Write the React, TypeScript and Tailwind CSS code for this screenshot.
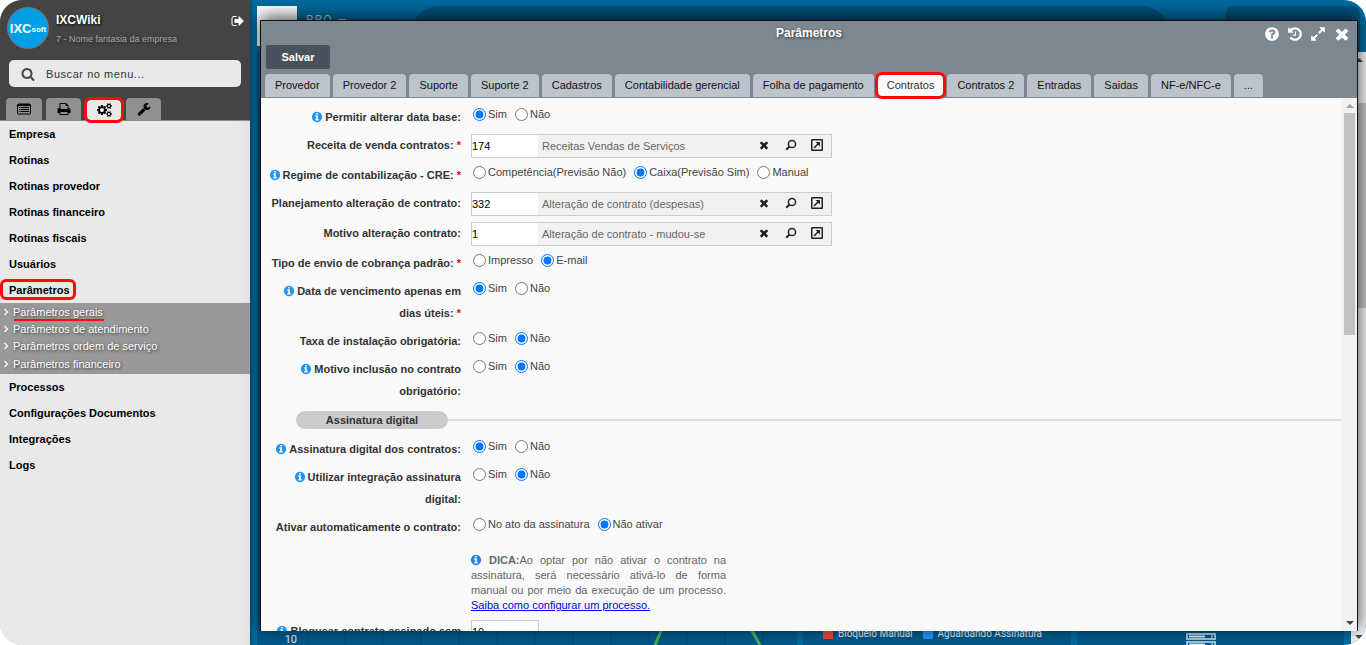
import { useState, type ReactNode } from 'react';

const CIRCLE = 'm640 416q0 209-103 385.5t-279.5 279.5-385.5 103-385.5-103-279.5-279.5-103-385.5 103-385.5 279.5-279.5 385.5-103 385.5 103 279.5 279.5 103 385.5z';
const SMALL_COG = 'v140q0 16-149 31-12 27-30 52 51 113 51 138 0 4-4 7-122 71-124 71-8 0-46-47t-52-68q-20 2-30 2t-30-2q-14 21-52 68t-46 47q-2 0-124-71-4-3-4-7 0-25 51-138-18-25-30-52-149-15-149-31v-140q0-16 149-31 13-29 30-52-51-113-51-138 0-4 4-7 4-2 35-20t59-34 30-16q8 0 46 46.5t52 67.5q20-2 30-2t30 2q51-71 92-112l6-2q4 0 124 70 4 3 4 7 0 25-51 138 17 23 30 52 149 15 149 31z';

const icons = {
    times: 'M1490 1322q0 40-28 68l-136 136q-28 28-68 28t-68-28l-294-294-294 294q-28 28-68 28t-68-28l-136-136q-28-28-28-68t28-68l294-294-294-294q-28-28-28-68t28-68l136-136q28-28 68-28t68 28l294 294 294-294q28-28 68-28t68 28l136 136q28 28 28 68t-28 68l-294 294 294 294q28 28 28 68z',
    question: 'M1024 1376v-192q0-14-9-23t-23-9h-192q-14 0-23 9t-9 23v192q0 14 9 23t23 9h192q14 0 23-9t9-23zm256-672q0-88-55.5-163t-138.5-116-170-41q-243 0-371 213-15 24 8 42l132 100q7 6 19 6 16 0 25-12 53-68 86-92 34-24 86-24 48 0 85.5 26t37.5 59q0 38-20 61t-68 45q-63 28-115.5 86.5t-52.5 125.5v36q0 14 9 23t23 9h192q14 0 23-9t9-23q0-19 21.5-49.5t54.5-49.5q32-18 49-28.5t46-35 44.5-48 28-60.5 12.5-81zm384 192q0 209-103 385.5t-279.5 279.5-385.5 103-385.5-103-279.5-279.5-103-385.5 103-385.5 279.5-279.5 385.5-103 385.5 103 279.5 279.5 103 385.5z',
    info: 'M1152 1376v-160q0-14-9-23t-23-9h-96v-512q0-14-9-23t-23-9h-320q-14 0-23 9t-9 23v160q0 14 9 23t23 9h96v320h-96q-14 0-23 9t-9 23v160q0 14 9 23t23 9h448q14 0 23-9t9-23zm-128-896v-160q0-14-9-23t-23-9h-192q-14 0-23 9t-9 23v160q0 14 9 23t23 9h192q14 0 23-9t9-23z' + CIRCLE,
    search: 'M1216 832q0-185-131.5-316.5t-316.5-131.5-316.5 131.5-131.5 316.5 131.5 316.5 316.5 131.5 316.5-131.5 131.5-316.5zm512 832q0 52-38 90t-90 38q-54 0-90-38l-343-342q-179 124-399 124-143 0-273.5-55.5t-225-150-150-225-55.5-273.5 55.5-273.5 150-225 225-150 273.5-55.5 273.5 55.5 225 150 150 225 55.5 273.5q0 220-124 399l343 343q37 37 37 90z',
    signOut: 'M704 1440q0 4 1 20t.5 26.5-3 23.5-10 19.5-20.5 6.5h-320q-119 0-203.5-84.5t-84.5-203.5v-704q0-119 84.5-203.5t203.5-84.5h320q13 0 22.5 9.5t9.5 22.5q0 4 1 20t.5 26.5-3 23.5-10 19.5-20.5 6.5h-320q-66 0-113 47t-47 113v704q0 66 47 113t113 47h312l11.5 1 11.5 3 8 5.5 7 9 2 13.5zm928-544q0 26-19 45l-544 544q-19 19-45 19t-45-19-19-45v-288h-448q-26 0-45-19t-19-45v-384q0-26 19-45t45-19h448v-288q0-26 19-45t45-19 45 19l544 544q19 19 19 45z',
    print: 'M448 1536h896v-256h-896v256zm0-640h896v-384h-160q-40 0-68-28t-28-68v-160h-640v640zm1152 64q0-26-19-45t-45-19-45 19-19 45 19 45 45 19 45-19 19-45zm128 0v416q0 13-9.5 22.5t-22.5 9.5h-224v160q0 40-28 68t-68 28h-960q-40 0-68-28t-28-68v-160h-224q-13 0-22.5-9.5t-9.5-22.5v-416q0-79 56.5-135.5t135.5-56.5h64v-544q0-40 28-68t68-28h672q40 0 88 20t76 48l152 152q28 28 48 76t20 88v256h64q79 0 135.5 56.5t56.5 135.5z',
    wrench: 'M448 1472q0-26-19-45t-45-19-45 19-19 45 19 45 45 19 45-19 19-45zm644-420l-682 682q-37 37-90 37-52 0-91-37l-106-108q-38-36-38-90 0-53 38-91l681-681q39 98 114.5 173.5t173.5 114.5zm634-435q0 39-23 106-47 134-164.5 217.5t-258.5 83.5q-185 0-316.5-131.5t-131.5-316.5 131.5-316.5 316.5-131.5q58 0 121.5 16.5t107.5 46.5q16 11 16 28t-16 28l-293 169v224l193 107q5-3 79-48.5t135.5-81 70.5-35.5q15 0 23.5 10t8.5 25z',
    cogs: 'M896 896q0-106-75-181t-181-75-181 75-75 181 75 181 181 75 181-75 75-181zm768 512q0-52-38-90t-90-38-90 38-38 90q0 53 37.5 90.5t90.5 37.5 90.5-37.5 37.5-90.5zm0-1024q0-52-38-90t-90-38-90 38-38 90q0 53 37.5 90.5t90.5 37.5 90.5-37.5 37.5-90.5zm-384 421v185q0 10-7 19.5t-16 10.5l-155 24q-11 35-32 76 34 48 90 115 7 11 7 20 0 12-7 19-23 30-82.5 89.5t-78.5 59.5q-11 0-21-7l-115-90q-37 19-77 31-11 108-23 155-7 24-30 24h-186q-11 0-20-7.5t-10-17.5l-23-153q-34-10-75-31l-118 89q-7 7-20 7-11 0-21-8-144-133-144-160 0-9 7-19 10-14 41-53t47-61q-23-44-35-82l-152-24q-10-1-17-9.5t-7-19.5v-185q0-10 7-19.5t16-10.5l155-24q11-35 32-76-34-48-90-115-7-11-7-20 0-12 7-20 22-30 82-89t79-59q11 0 21 7l115 90q34-18 77-32 11-108 23-154 7-24 30-24h186q11 0 20 7.5t10 17.5l23 153q34 10 75 31l118-89q8-7 20-7 11 0 21 8 144 133 144 160 0 8-7 19-12 16-42 54t-45 60q23 48 34 82l152 23q10 2 17 10.5t7 19.5zM1920 1338' + SMALL_COG + 'M1920 314' + SMALL_COG,
    expand: 'M883 1056q0 13-10 23l-332 332 144 144q19 19 19 45t-19 45-45 19h-448q-26 0-45-19t-19-45v-448q0-26 19-45t45-19 45 19l144 144 332-332q10-10 23-10t23 10l114 114q10 10 10 23zm781-864v448q0 26-19 45t-45 19-45-19l-144-144-332 332q-10 10-23 10t-23-10l-114-114q-10-10-10-23t10-23l332-332-144-144q-19-19-19-45t19-45 45-19h448q26 0 45 19t19 45z',
    history: 'M1664 896q0 156-61 298t-164 245-245 164-298 61q-172 0-327-72.5t-264-204.5q-7-10-6.5-22.5t8.5-20.5l137-138q10-9 25-9 16 2 23 12 73 95 179 147t225 52q104 0 198.5-40.5t163.5-109.5 109.5-163.5 40.5-198.5-40.5-198.5-109.5-163.5-163.5-109.5-198.5-40.5q-98 0-188 35.5t-160 101.5l137 138q31 30 14 69-17 40-59 40h-448q-26 0-45-19t-19-45v-448q0-42 40-59 39-17 69 14l130 129q107-101 244.5-156.5t284.5-55.5q156 0 298 61t245 164 164 245 61 298zm-640-288v448q0 14-9 23t-23 9h-320q-14 0-23-9t-9-23v-64q0-14 9-23t23-9h224v-352q0-14 9-23t23-9h64q14 0 23 9t9 23z',
};

function Icon({ name, className }: { name: keyof typeof icons; className: string }) {
    return (
        <svg viewBox={name === 'cogs' ? '0 0 1920 1792' : '0 0 1792 1792'} fill="currentColor" className={className} aria-hidden="true">
            <path d={icons[name]} />
        </svg>
    );
}

function ListIcon() {
    return (
        <svg viewBox="0 0 14 12" className="h-3 w-3.5" fill="none" stroke="currentColor" aria-hidden="true">
            <rect x=".5" y="1" width="13" height="10" rx="1" />
            <path d="M1 2h12" strokeWidth="2" />
            <path d="M2 4.5h1.500M4 4.500h8M2 6.500h1.500M4 6.500h8M2 8.500h1.500M4 8.500h8" />
        </svg>
    );
}

const menuBefore = ['Empresa', 'Rotinas', 'Rotinas provedor', 'Rotinas financeiro', 'Rotinas fiscais', 'Usuários'];
const menuAfter = ['Processos', 'Configurações Documentos', 'Integrações', 'Logs'];
const submenu = ['Parâmetros gerais', 'Parâmetros de atendimento', 'Parâmetros ordem de serviço', 'Parâmetros financeiro'];
const tabs = ['Provedor', 'Provedor 2', 'Suporte', 'Suporte 2', 'Cadastros', 'Contabilidade gerencial', 'Folha de pagamento', 'Contratos', 'Contratos 2', 'Entradas', 'Saidas', 'NF-e/NFC-e', '...'];

function MenuItem({ label }: { label: string }) {
    return (
        <li>
            <a href="#" className="block px-[9px] leading-[26px] font-bold text-black">{label}</a>
        </li>
    );
}

function Sidebar() {
    return (
        <aside className="relative z-10 flex w-[250px] shrink-0 flex-col bg-[#e9e9e9] shadow-[0_0_4px_rgba(0,0,0,0.6)]">
            <header className="relative z-10 border-b border-[#888] bg-[#444]">
                <div className="flex h-[60px] items-start pt-[7px] pr-[5px] pl-[7px]">
                    <div className="flex h-[42px] w-[42px] shrink-0 items-center justify-center rounded-full border border-[#777] bg-[#009fe3] text-white">
                        <span className="text-[13px] leading-none font-bold">IXC</span>
                        <span className="pt-1 text-[8px] leading-none font-bold">soft</span>
                    </div>
                    <div className="flex-1 pl-[7px]">
                        <h1 className="pt-[5px] text-xs leading-4 font-bold text-white [text-shadow:1px_1px_3px_#000]">IXCWiki</h1>
                        <p className="pt-[5px] text-[9px] leading-3 text-[#aaa] [text-shadow:1px_1px_3px_#222]">7 - Nome fantasia da empresa</p>
                    </div>
                    <button type="button" aria-label="Sair" className="pt-[7px] text-white">
                        <Icon name="signOut" className="h-3.5 w-3.5" />
                    </button>
                </div>
                <label className="mx-[9px] flex h-[27px] items-center rounded-[5px] bg-[#e9e9e9] pl-3">
                    <Icon name="search" className="h-3.5 w-3.5 shrink-0 text-[#444]" />
                    <input type="text" aria-label="Buscar no menu" placeholder="Buscar no menu..." className="ml-[11px] w-full min-w-0 bg-transparent pt-px tracking-wider outline-none placeholder:text-[#333]" />
                </label>
                <div className="mt-[11px] flex pl-[6px]">
                    <button type="button" aria-label="Menu" className="mr-1 flex h-[22px] w-9 items-center justify-center rounded-t-[4px] bg-[#909090] text-black"><ListIcon /></button>
                    <button type="button" aria-label="Relatórios" className="mr-[6px] flex h-[22px] w-[35px] items-center justify-center rounded-t-[4px] bg-[#909090] text-black"><Icon name="print" className="h-3.5 w-3.5" /></button>
                    <button type="button" aria-label="Configurações" className="mr-[5px] flex h-5 w-[34px] items-center justify-center self-end rounded-[4px] bg-[#e9e9e9] text-black outline-3 outline-[#ff0a0a]"><Icon name="cogs" className="h-3.5 w-[15px]" /></button>
                    <button type="button" aria-label="Ferramentas" className="flex h-[22px] w-[35px] items-center justify-center rounded-t-[4px] bg-[#909090] text-black"><Icon name="wrench" className="h-3.5 w-3.5" /></button>
                </div>
            </header>
            <nav className="flex-1 overflow-hidden bg-linear-to-r from-[#e9e9e9] from-95% to-[#e1e1e1]">
                <ul>
                    {menuBefore.map((m) => <MenuItem key={m} label={m} />)}
                    <li className="relative">
                        <a href="#" className="block px-[9px] leading-[26px] font-bold text-black">Parâmetros</a>
                        <span className="absolute top-[2px] left-0 h-[21px] w-[76px] rounded-[6px] border-3 border-[#ff0a0a]" />
                    </li>
                    <li>
                        <ul className="h-[71px] bg-[#999]">
                            {submenu.map((s, i) => (
                                <li key={s} className="flex h-[17px] items-center pl-1 nth-3:h-[18px] nth-4:h-[18px]">
                                    <svg viewBox="0 0 5 8" className="h-2 w-[5px]" fill="none" stroke="#fff" strokeWidth="1.200"><path d="M.5 1 3.500 4 .5 7" /></svg>
                                    <a href="#" className="relative ml-1 leading-4 text-white [text-shadow:1px_1px_3px_#333]">
                                        {s}
                                        {i === 0 && <span className="absolute -bottom-px left-px h-[2px] w-full bg-[#ff0a0a]" />}
                                    </a>
                                </li>
                            ))}
                        </ul>
                    </li>
                    {menuAfter.map((m) => <MenuItem key={m} label={m} />)}
                </ul>
            </nav>
        </aside>
    );
}

function Arrow({ up, dark }: { up?: boolean; dark?: boolean }) {
    return (
        <svg viewBox="0 0 8 4" className="h-1 w-2 shrink-0" fill={dark ? '#444' : '#a3a3a3'} aria-hidden="true">
            <path d={up ? 'M0 4 4 0l4 4z' : 'M0 0h8L4 4z'} />
        </svg>
    );
}

// dashboard behind the dialog, only its edges are visible
function Dashboard() {
    return (
        <div className="flex h-full flex-col bg-[#006a9e] font-['Roboto',sans-serif]">
            <div className="flex h-[52px] shrink-0 items-start overflow-hidden pt-[6px] pl-[7px]">
                <div className="h-10 w-10 bg-white" />
                <span className="w-[114px] pl-[9px] text-xs leading-7 tracking-widest text-white/70">BRO —</span>
                <div className="h-14 flex-1 rounded-t-[28px] bg-[#00527f]" />
                <div className="ml-14 h-14 w-[134px] rounded-t-lg bg-[#00527f]" />
                <div className="w-[6px]" />
            </div>
            <div className="flex min-h-0 flex-1">
                <div className="grid min-w-0 flex-1 grid-cols-[540fr_268fr_267fr] gap-[6px] px-[7px]">
                    <section className="flex min-w-0 flex-col justify-end bg-[#00588a]">
                        <div className="flex h-[14px] text-[11px] leading-[18px] text-white/90">
                            <span className="w-[50px] shrink-0 pr-[10px] text-right">10</span>
                            <svg viewBox="0 0 490 14" preserveAspectRatio="none" className="h-full min-w-0 flex-1" fill="none" aria-hidden="true">
                                <path d="M0 0v14M38 0v14M76 0v14M114 0v14M152 0v14M190 0v14M228 0v14M266 0v14M304 0v14M342 0v14M380 0v14M418 0v14M456 0v14" stroke="#004a73" />
                                <path d="m348 14 6-14M445 0l8 14" stroke="#4caf50" strokeWidth="3" />
                            </svg>
                        </div>
                    </section>
                    <section className="flex min-w-0 flex-col justify-end bg-[#00588a]">
                        <div className="flex h-[17px] items-start pl-5 text-[10px] leading-3 whitespace-nowrap text-white/90">
                            <i className="mt-px mr-[5px] h-[10px] w-[10px] bg-[#f44336]" />
                            <span>Bloqueio Manual</span>
                            <i className="mt-px mr-[5px] ml-[10px] h-[10px] w-[10px] bg-[#2196f3]" />
                            <span>Aguardando Assinatura</span>
                        </div>
                    </section>
                    <section className="flex min-w-0 items-end bg-[#00588a] pl-[109px]">
                        <svg viewBox="0 0 30 13" className="h-[13px] w-[30px]" fill="none" stroke="#9fc4d6" aria-hidden="true">
                            <path d="M1 2h28v5H1zM1 10h28v5H1z" strokeWidth="2" />
                            <path d="M3 4.500h16M3 12.500h16" stroke="#d5e5ec" strokeWidth="2" />
                            <path d="M25 4.500h2M25 12.500h2" strokeWidth="2" />
                        </svg>
                    </section>
                </div>
                <div className="flex w-[15px] flex-col items-center bg-[#f1f1f1] py-[6px]">
                    <Arrow up dark />
                    <div className="mt-[41px] h-[205px] w-full bg-[#c1c1c1]" />
                    <div className="flex-1" />
                    <Arrow dark />
                </div>
            </div>
        </div>
    );
}

function Row({ id, label, info, required, control, children }: { id: string; label: string; info?: boolean; required?: boolean; control?: boolean; children: ReactNode }) {
    const text = (
        <>
            {info && <Icon name="info" className="mr-[2px] inline h-3 w-3 align-[-2px] text-[#2196f3]" />}
            {label}
            {required && <span className="text-red-600"> *</span>}
        </>
    );
    return (
        <div className="flex gap-[10px] pb-[6px]">
            <div className="w-[200px] shrink-0 pl-1 text-right leading-[22px] font-bold text-[#333]">
                {control ? <label htmlFor={id}>{text}</label> : <span id={id}>{text}</span>}
            </div>
            {children}
        </div>
    );
}

function RadioRow({ id, label, info, required, options, value }: { id: string; label: string; info?: boolean; required?: boolean; options: string[]; value: string }) {
    const [selected, setSelected] = useState(value);
    return (
        <Row id={id} label={label} info={info} required={required}>
            <div role="radiogroup" aria-labelledby={id} className="flex h-4 gap-2 pl-[2px]">
                {options.map((o) => (
                    <label key={o} className="flex items-center gap-[2px] leading-4 text-[#444]">
                        <input type="radio" name={id} checked={selected === o} onChange={() => setSelected(o)} className="h-[13px] w-[13px]" />
                        {o}
                    </label>
                ))}
            </div>
        </Row>
    );
}

function LookupRow({ id, label, required, code, text }: { id: string; label: string; required?: boolean; code: string; text: string }) {
    return (
        <Row id={id} label={label} required={required} control>
            <div className="flex h-6 w-[361px] items-center border border-[#ccc] bg-[#f1f1f1] text-[#222]">
                <input id={id} type="text" defaultValue={code} className="h-full w-[66px] bg-white text-black outline-none" />
                <span className="flex-1 pl-1 text-[#666]">{text}</span>
                <button type="button" aria-label="Limpar" className="flex w-[26px] justify-center pb-[2px]"><Icon name="times" className="h-3 w-3" /></button>
                <button type="button" aria-label="Buscar" className="flex w-[27px] justify-center pb-[2px]">
                    <svg viewBox="0 0 12 12" className="h-3 w-3" fill="none" stroke="currentColor"><circle cx="7" cy="5" r="3.600" strokeWidth="1.500" /><path d="M4.500 7.500 1.200 10.800" strokeWidth="2" /></svg>
                </button>
                <button type="button" aria-label="Abrir" className="mr-px flex w-[26px] justify-center pb-[2px]">
                    <svg viewBox="0 0 12 12" className="h-3 w-3" fill="none" stroke="currentColor"><rect x=".75" y=".75" width="10.500" height="10.500" rx=".5" strokeWidth="1.500" /><path d="M3 9l4-4" strokeWidth="1.600" /><path d="M4.500 3H9v4.500z" fill="currentColor" stroke="none" /></svg>
                </button>
            </div>
        </Row>
    );
}

function ParametersDialog() {
    const [active, setActive] = useState('Contratos');
    return (
        <div role="dialog" aria-labelledby="dialog-title" className="absolute top-5 right-2 bottom-[14px] left-[10px] flex flex-col overflow-hidden border border-b-0 border-[#111] bg-[#f9f9f9] shadow-[0_-3px_16px_rgba(0,0,0,0.7)]">
            <header className="relative shrink-0 bg-[#7d8790] pb-px">
                <div className="grid h-6 grid-cols-[1fr_auto_1fr] text-white">
                    <h2 id="dialog-title" className="col-start-2 text-xs leading-6 font-bold [text-shadow:1px_1px_3px_#333]">Parâmetros</h2>
                    <div className="flex items-center justify-end gap-[7px] pt-[2px] pr-[6px]">
                        <button type="button" aria-label="Ajuda"><Icon name="question" className="block h-4 w-4" /></button>
                        <button type="button" aria-label="Histórico"><Icon name="history" className="block h-4 w-4" /></button>
                        <button type="button" aria-label="Expandir"><Icon name="expand" className="block h-4 w-4" /></button>
                        <button type="button" aria-label="Fechar"><Icon name="times" className="block h-[18px] w-[18px]" /></button>
                    </div>
                </div>
                <button type="button" className="ml-[5px] block h-6 w-16 rounded-[2px] bg-[#47525d] font-bold text-white">Salvar</button>
                <div role="tablist" className="mt-[5px] ml-1 flex items-center gap-[3px]">
                    {tabs.map((t) => (
                        <button
                            key={t}
                            type="button"
                            role="tab"
                            aria-selected={t === active}
                            onClick={() => setActive(t)}
                            className={t === active
                                ? 'relative mx-px h-[21px] rounded-[4px] bg-[#f9f9f9] px-[9px] text-[#333] outline-3 outline-[#ff0a0a]'
                                : 'h-[23px] rounded-t-[4px] bg-[#bdc3cb] px-[10px] text-[#111]'}
                        >
                            {t}
                        </button>
                    ))}
                </div>
            </header>
            <div className="flex min-h-0 flex-1">
                <form className="min-w-0 flex-1 overflow-hidden pt-2">
                    <RadioRow id="alterar-data" label="Permitir alterar data base:" info options={['Sim', 'Não']} value="Sim" />
                    <LookupRow id="receita" label="Receita de venda contratos:" required code="174" text="Receitas Vendas de Serviços" />
                    <RadioRow id="regime" label="Regime de contabilização - CRE:" info required options={['Competência(Previsão Não)', 'Caixa(Previsão Sim)', 'Manual']} value="Caixa(Previsão Sim)" />
                    <LookupRow id="planejamento" label="Planejamento alteração de contrato:" code="332" text="Alteração de contrato (despesas)" />
                    <LookupRow id="motivo" label="Motivo alteração contrato:" code="1" text="Alteração de contrato - mudou-se" />
                    <RadioRow id="tipo-envio" label="Tipo de envio de cobrança padrão:" required options={['Impresso', 'E-mail']} value="E-mail" />
                    <RadioRow id="vencimento" label="Data de vencimento apenas em dias úteis:" info required options={['Sim', 'Não']} value="Sim" />
                    <RadioRow id="taxa" label="Taxa de instalação obrigatória:" options={['Sim', 'Não']} value="Não" />
                    <RadioRow id="motivo-inclusao" label="Motivo inclusão no contrato obrigatório:" info options={['Sim', 'Não']} value="Não" />
                    <div className="flex items-center pt-[3px] pb-[9px] pl-[35px]">
                        <h3 className="w-[152px] rounded-full bg-[#ccc] text-center leading-[18px] font-bold text-[#333]">Assinatura digital</h3>
                        <div className="h-[2px] flex-1 bg-[#ddd]" />
                    </div>
                    <RadioRow id="assinatura" label="Assinatura digital dos contratos:" info options={['Sim', 'Não']} value="Sim" />
                    <RadioRow id="integracao" label="Utilizar integração assinatura digital:" info options={['Sim', 'Não']} value="Não" />
                    <RadioRow id="ativar" label="Ativar automaticamente o contrato:" options={['No ato da assinatura', 'Não ativar']} value="Não ativar" />
                    <p className="mt-[9px] mb-[7px] ml-[210px] w-[255px] text-justify leading-[15px] text-[#666]">
                        <Icon name="info" className="-ml-px inline h-3 w-3 align-[-2px] text-[#1e88e5]" /> <b>DICA:</b>Ao optar por não ativar o contrato na assinatura, será necessário ativá-lo de forma manual ou por meio da execução de um processo. <a href="#" className="text-[#0000ee] underline">Saiba como configurar um processo.</a>
                    </p>
                    <Row id="bloquear" label="Bloquear contrato assinado sem ativação:" info control>
                        <input id="bloquear" type="text" defaultValue="10" className="h-6 w-[68px] border border-[#ccc] bg-white text-black outline-none" />
                    </Row>
                </form>
                <div className="flex w-[15px] flex-col items-center bg-[#f1f1f1] py-[6px]">
                    <Arrow up />
                    <div className="mt-[5px] h-[222px] w-[11px] bg-[#c1c1c1]" />
                    <div className="flex-1" />
                    <Arrow dark />
                </div>
            </div>
        </div>
    );
}

export default function App() {
    return (
        <div className="flex h-screen overflow-hidden rounded-[22px] bg-white font-['Liberation_Sans',Arial,sans-serif] text-[11px]">
            <Sidebar />
            <main className="relative min-w-0 flex-1 overflow-hidden">
                <Dashboard />
                <ParametersDialog />
            </main>
        </div>
    );
}
